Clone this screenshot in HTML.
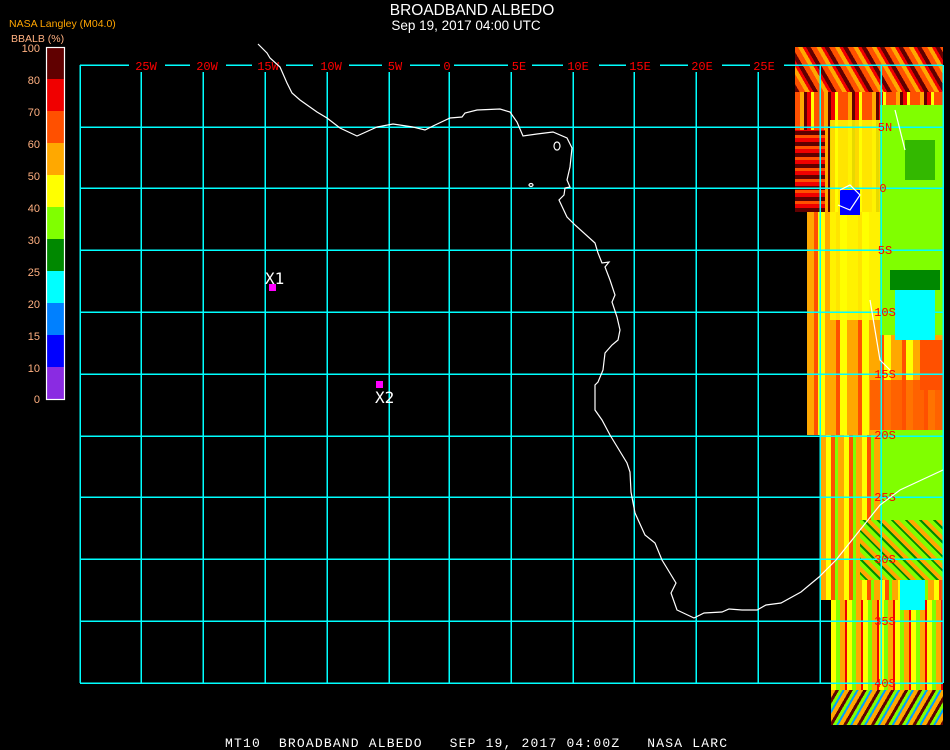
<!DOCTYPE html>
<html><head><meta charset="utf-8"><style>
html,body{margin:0;padding:0;background:#000;width:950px;height:750px;overflow:hidden}
#w{position:relative;width:950px;height:750px}
.sat{position:absolute}
</style></head><body><div id="w">
<!-- satellite swath -->
<div class="sat" style="left:795px;top:47px;width:148px;height:165px;background:repeating-linear-gradient(90deg,#ff5000 0 5px,#ffa800 5px 9px,#600000 9px 12px,#f00000 12px 16px,#ffff00 16px 19px,#ff5000 19px 24px)"></div>
<div class="sat" style="left:807px;top:212px;width:136px;height:223px;background:repeating-linear-gradient(90deg,#ffa800 0 7px,#ff5000 7px 11px,#ffff00 11px 18px,#ffa800 18px 22px)"></div>
<div class="sat" style="left:820px;top:435px;width:123px;height:165px;background:repeating-linear-gradient(90deg,#ffa800 0 6px,#ffff00 6px 11px,#ff5000 11px 15px,#80ff00 15px 18px)"></div>
<div class="sat" style="left:831px;top:600px;width:112px;height:125px;background:repeating-linear-gradient(90deg,#ffff00 0 5px,#80ff00 5px 9px,#ffa800 9px 14px,#f00000 14px 16px)"></div>
<!-- overlays -->
<div class="sat" style="left:795px;top:47px;width:148px;height:45px;background:repeating-linear-gradient(60deg,#600000 0 4px,#ff5000 4px 9px,#ffa800 9px 13px,#f00000 13px 16px)"></div>
<div class="sat" style="left:795px;top:130px;width:30px;height:82px;background:repeating-linear-gradient(0deg,#600000 0 4px,#f00000 4px 8px,#ff5000 8px 11px)"></div>
<div class="sat" style="left:880px;top:105px;width:63px;height:230px;background:#80ff00"></div>
<div class="sat" style="left:905px;top:140px;width:30px;height:40px;background:#008800;opacity:.6"></div>
<div class="sat" style="left:895px;top:290px;width:40px;height:50px;background:#00ffff"></div>
<div class="sat" style="left:890px;top:270px;width:50px;height:20px;background:#008800"></div>
<div class="sat" style="left:920px;top:340px;width:23px;height:50px;background:#ff5000"></div>
<div class="sat" style="left:830px;top:120px;width:50px;height:200px;background:#ffff00;opacity:.85"></div>
<div class="sat" style="left:840px;top:190px;width:20px;height:25px;background:#0000ff"></div>
<div class="sat" style="left:870px;top:380px;width:73px;height:50px;background:#ff5000;opacity:.8"></div>
<div class="sat" style="left:880px;top:430px;width:63px;height:90px;background:#80ff00"></div>
<div class="sat" style="left:900px;top:570px;width:25px;height:40px;background:#00ffff"></div>
<div class="sat" style="left:860px;top:520px;width:83px;height:60px;background:repeating-linear-gradient(45deg,#80ff00 0 4px,#008800 4px 6px,#ffa800 6px 10px)"></div>
<div class="sat" style="left:831px;top:690px;width:112px;height:35px;background:repeating-linear-gradient(120deg,#ffa800 0 4px,#600000 4px 7px,#80ff00 7px 10px,#00a0ff 10px 12px)"></div>

<svg width="950" height="750" style="position:absolute;left:0;top:0" font-family="Liberation Mono, monospace">
<g stroke="#00ffff" stroke-width="1.5" fill="none" shape-rendering="crispEdges">
<path d="M80 65H943M80 127H943M80 188H943M80 250H943M80 312H943M80 374H943M80 436H943M80 497H943M80 559H943M80 621H943M80 683H943"/>
<path d="M80 65V683M141 65V683M203 65V683M265 65V683M327 65V683M389 65V683M449 65V683M511 65V683M573 65V683M634 65V683M696 65V683M758 65V683M820 65V683M881 65V683M943 65V683"/>
</g>
<g fill="#000">
<rect x="129" y="58" width="36" height="14"/><rect x="190" y="58" width="36" height="14"/><rect x="252" y="58" width="34" height="14"/>
<rect x="313" y="58" width="36" height="14"/><rect x="382" y="58" width="28" height="14"/><rect x="440" y="58" width="14" height="14"/>
<rect x="508" y="58" width="24" height="14"/><rect x="563" y="58" width="36" height="14"/><rect x="626" y="58" width="34" height="14"/>
<rect x="688" y="58" width="34" height="14"/><rect x="750" y="58" width="34" height="14"/>
</g>
<g fill="#ff0000" font-size="12" text-anchor="middle">
<text x="146" y="70">25W</text><text x="207" y="70">20W</text><text x="268" y="70">15W</text><text x="331" y="70">10W</text>
<text x="395" y="70">5W</text><text x="447" y="70">0</text><text x="519" y="70">5E</text><text x="578" y="70">10E</text>
<text x="640" y="70">15E</text><text x="702" y="70">20E</text><text x="764" y="70">25E</text>
<text x="885" y="131">5N</text><text x="883" y="192">0</text><text x="885" y="254">5S</text><text x="885" y="316">10S</text>
<text x="885" y="378">15S</text><text x="885" y="439">20S</text><text x="885" y="501">25S</text><text x="885" y="563">30S</text>
<text x="885" y="625">35S</text><text x="885" y="687">40S</text>
</g>
<g stroke="#fff" stroke-width="1.2" fill="none">
<polyline points="258,44 267,53 270,58 280,67 287,83 292,93 300,100 317,112 327,118 340,128 357,136 377,127 393,124 413,127 425,130 433,126 450,118 462,117 465,113 477,110 500,109 510,112 517,122 523,136 537,134 553,132 567,138 572,148 570,167 567,180 570,187 565,188 564,195 559,200 567,217 575,225 595,243 598,253 602,263 609,262 605,267 610,280 615,295 612,302 617,317 620,330 618,340 612,345 605,353 603,370 598,382 595,385 595,410 602,420 610,435 627,463 630,472 631,492 635,513 645,535 655,543 662,560 676,583 671,593 677,610 694,618 704,613 722,612 729,609 742,610 757,610 766,605 781,603 801,592 819,577 836,560 860,530 880,505 900,490 943,470"/>
<ellipse cx="557" cy="146" rx="3" ry="4"/><ellipse cx="531" cy="185" rx="2" ry="1.5"/>
<polyline points="895,110 900,130 905,150"/><polyline points="870,300 875,330 880,360 890,370"/>
<polyline points="840,190 850,185 860,195 850,210 838,205"/>
</g>
<rect x="269" y="284" width="7" height="7" fill="#ff00ff"/>
<rect x="376" y="381" width="7" height="7" fill="#ff00ff"/>
<g fill="#fff" font-family="DejaVu Sans Mono, monospace" font-size="16">
<text x="265" y="284">X1</text><text x="375" y="403">X2</text>
</g>
<g font-family="Liberation Sans, sans-serif" fill="#fff" text-anchor="middle">
<text x="472" y="15" font-size="15.5">BROADBAND ALBEDO</text>
<text x="466" y="30" font-size="13.5">Sep 19, 2017 04:00 UTC</text>
</g>
<text x="9" y="27" font-family="Liberation Sans, sans-serif" font-size="10.5" fill="#ffa500">NASA Langley (M04.0)</text>
<text x="11" y="42" font-family="Liberation Sans, sans-serif" font-size="10.5" fill="#ffb080">BBALB (%)</text>
<g>
<rect x="46" y="47" width="19" height="32" fill="#600000"/>
<rect x="46" y="79" width="19" height="32" fill="#f00000"/>
<rect x="46" y="111" width="19" height="32" fill="#ff5000"/>
<rect x="46" y="143" width="19" height="32" fill="#ffa800"/>
<rect x="46" y="175" width="19" height="32" fill="#ffff00"/>
<rect x="46" y="207" width="19" height="32" fill="#80ff00"/>
<rect x="46" y="239" width="19" height="32" fill="#008800"/>
<rect x="46" y="271" width="19" height="32" fill="#00ffff"/>
<rect x="46" y="303" width="19" height="32" fill="#0080ff"/>
<rect x="46" y="335" width="19" height="32" fill="#0000ff"/>
<rect x="46" y="367" width="19" height="33" fill="#8a2be2"/>
<rect x="46.5" y="47.5" width="18" height="352" fill="none" stroke="#fff" stroke-width="1.2"/>
</g>
<g font-family="Liberation Sans, sans-serif" font-size="11" fill="#ffb080" text-anchor="end">
<text x="40" y="52">100</text><text x="40" y="84">80</text><text x="40" y="116">70</text><text x="40" y="148">60</text>
<text x="40" y="180">50</text><text x="40" y="212">40</text><text x="40" y="244">30</text><text x="40" y="276">25</text>
<text x="40" y="308">20</text><text x="40" y="340">15</text><text x="40" y="372">10</text><text x="40" y="403">0</text>
</g>
<text x="225" y="747" font-family="Liberation Mono, monospace" font-size="13" fill="#fff" textLength="502" lengthAdjust="spacing" xml:space="preserve">MT10  BROADBAND ALBEDO   SEP 19, 2017 04:00Z   NASA LARC</text>
</svg>
</div></body></html>
